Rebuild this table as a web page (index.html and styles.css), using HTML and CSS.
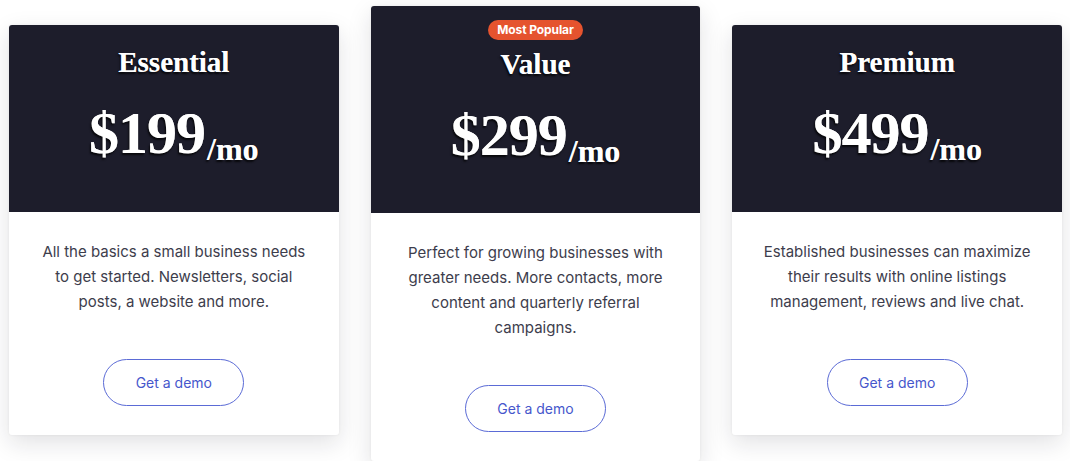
FILE: index.html
```html
<!DOCTYPE html>
<html lang="en">
<head>
<meta charset="utf-8">
<title>Pricing</title>
<link rel="stylesheet" href="styles.css">
</head>
<body>
<main class="plans">
  <section class="card">
    <header class="card-head">
      <h2 class="plan-name">Essential</h2>
      <div class="price">$199<span class="per">/mo</span></div>
    </header>
    <div class="card-body">
      <p class="desc">All the basics a small business needs to get started. Newsletters, social posts, a website and more.</p>
      <a class="demo-btn" href="#">Get a demo</a>
    </div>
  </section>
  <section class="card featured">
    <header class="card-head">
      <span class="badge">Most Popular</span>
      <h2 class="plan-name">Value</h2>
      <div class="price">$299<span class="per">/mo</span></div>
    </header>
    <div class="card-body">
      <p class="desc">Perfect for growing businesses with greater needs. More contacts, more content and quarterly referral campaigns.</p>
      <a class="demo-btn" href="#">Get a demo</a>
    </div>
  </section>
  <section class="card">
    <header class="card-head">
      <h2 class="plan-name">Premium</h2>
      <div class="price">$499<span class="per">/mo</span></div>
    </header>
    <div class="card-body">
      <p class="desc">Established businesses can maximize their results with online listings management, reviews and live chat.</p>
      <a class="demo-btn" href="#">Get a demo</a>
    </div>
  </section>
</main>
</body>
</html>
```
FILE: styles.css
```css
* { box-sizing: border-box; }
html, body { margin: 0; padding: 0; background: #ffffff; }
body { font-family: "Inter", "Liberation Sans", sans-serif; }

.plans {
  display: flex;
  align-items: flex-start;
  gap: 32px;
  padding: 6px 8px 0 9px;
}

.card {
  flex: 1 1 0;
  min-width: 0;
  margin-top: 19px;
  background: #ffffff;
  border-radius: 3px;
  box-shadow: 0 8px 24px rgba(20, 20, 40, 0.13), 0 0 3px rgba(20, 20, 40, 0.06);
  display: flex;
  flex-direction: column;
}
.card.featured { margin-top: 0; }

.card-head {
  background: #1d1d2b;
  border-radius: 3px 3px 0 0;
  color: #ffffff;
  text-align: center;
  padding: 20px 10px 44px;
  display: flex;
  flex-direction: column;
  align-items: center;
  font-family: "Liberation Serif", "Times New Roman", serif;
  text-shadow: -1px 2px 2px rgba(0, 0, 0, 0.75), 0 0 0.6px #ffffff;
}
.featured .card-head { padding-top: 14px; padding-bottom: 43px; }

.badge {
  display: block;
  height: 20px;
  line-height: 20px;
  padding: 0 9px;
  margin-bottom: 7px;
  border-radius: 10px;
  background: #e5532e;
  color: #ffffff;
  font-family: "Inter", "Liberation Sans", sans-serif;
  font-weight: 700;
  font-size: 12px;
  text-shadow: none;
  letter-spacing: -0.1px;
}

.plan-name {
  margin: 0;
  font-size: 29px;
  line-height: 35px;
  font-weight: 700;
}

.price {
  margin-top: 18px;
  font-size: 60px;
  line-height: 70px;
  font-weight: 700;
  letter-spacing: -1px;
}
.per {
  font-size: 32px;
  line-height: 1;
  vertical-align: -7px;
  letter-spacing: 0;
  margin-left: 2px;
}

.card-body {
  padding: 27px 30px 29px;
  display: flex;
  flex-direction: column;
  align-items: center;
}

.desc {
  margin: 0;
  font-size: 15px;
  line-height: 25px;
  color: #3d3d4c;
  text-align: center;
}

.demo-btn {
  margin-top: 45px;
  width: 141px;
  height: 47px;
  border: 1px solid #5b6bd6;
  border-radius: 24px;
  display: flex;
  align-items: center;
  justify-content: center;
  color: #4657cc;
  font-size: 14px;
  text-decoration: none;
}
```
